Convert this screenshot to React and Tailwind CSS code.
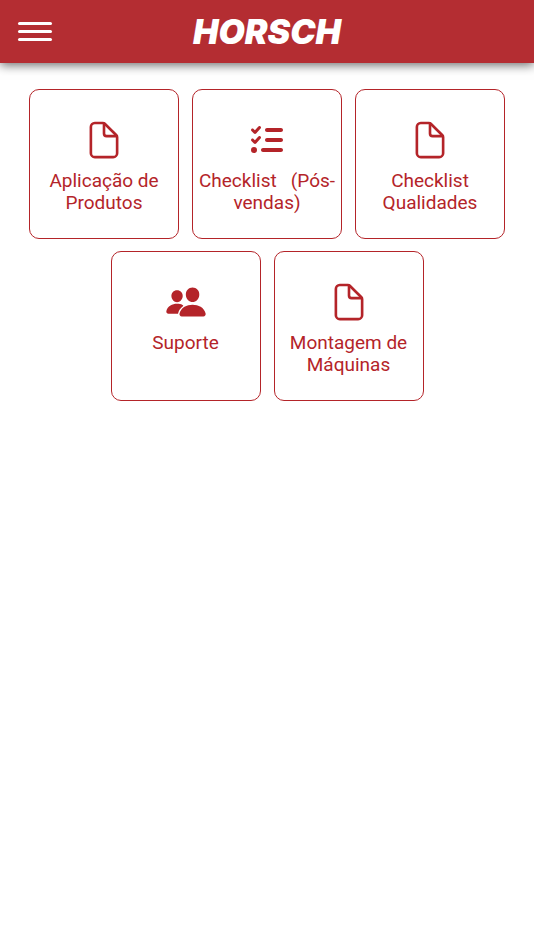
import { IoDocumentOutline, IoPeople } from "react-icons/io5";
import { FaListCheck } from "react-icons/fa6";

const tiles = [
  { label: "Aplicação de Produtos", Icon: IoDocumentOutline, size: 42 },
  { label: "Checklist \u00a0 (Pós-vendas)", Icon: FaListCheck, size: 32 },
  { label: "Checklist Qualidades", Icon: IoDocumentOutline, size: 42 },
  { label: "Suporte", Icon: IoPeople, size: 42 },
  { label: "Montagem de Máquinas", Icon: IoDocumentOutline, size: 42 },
];

function Tile({ label, Icon, size }) {
  return (
    <button
      type="button"
      className="flex h-[150px] w-[150px] flex-col items-center rounded-[10px] border border-[#b42429] bg-white px-1 pt-[29px] text-[#b42429]"
    >
      <span className="flex h-[42px] items-center justify-center">
        <Icon size={size} aria-hidden="true" />
      </span>
      <span className="mt-[9px] text-[19px] leading-[22px]">{label}</span>
    </button>
  );
}

export default function App() {
  return (
    <div className="min-h-screen bg-white font-['Roboto',sans-serif]">
      <header className="grid h-[63px] grid-cols-[1fr_auto_1fr] items-center bg-[#b42d32] px-[18px] shadow-[0_2px_10px_rgba(0,0,0,0.6)]">
        <button type="button" aria-label="Menu" className="flex w-[34px] flex-col gap-[5px]">
          <span className="h-[3px] rounded-full bg-white" />
          <span className="h-[3px] rounded-full bg-white" />
          <span className="h-[3px] rounded-full bg-white" />
        </button>
        <span className="font-['Inter',sans-serif] text-[34px] leading-none font-black text-white italic">
          HORSCH
        </span>
      </header>
      <main className="flex flex-wrap justify-center gap-x-[13px] gap-y-3 px-6 pt-[26px]">
        {tiles.map((tile) => (
          <Tile key={tile.label} {...tile} />
        ))}
      </main>
    </div>
  );
}
